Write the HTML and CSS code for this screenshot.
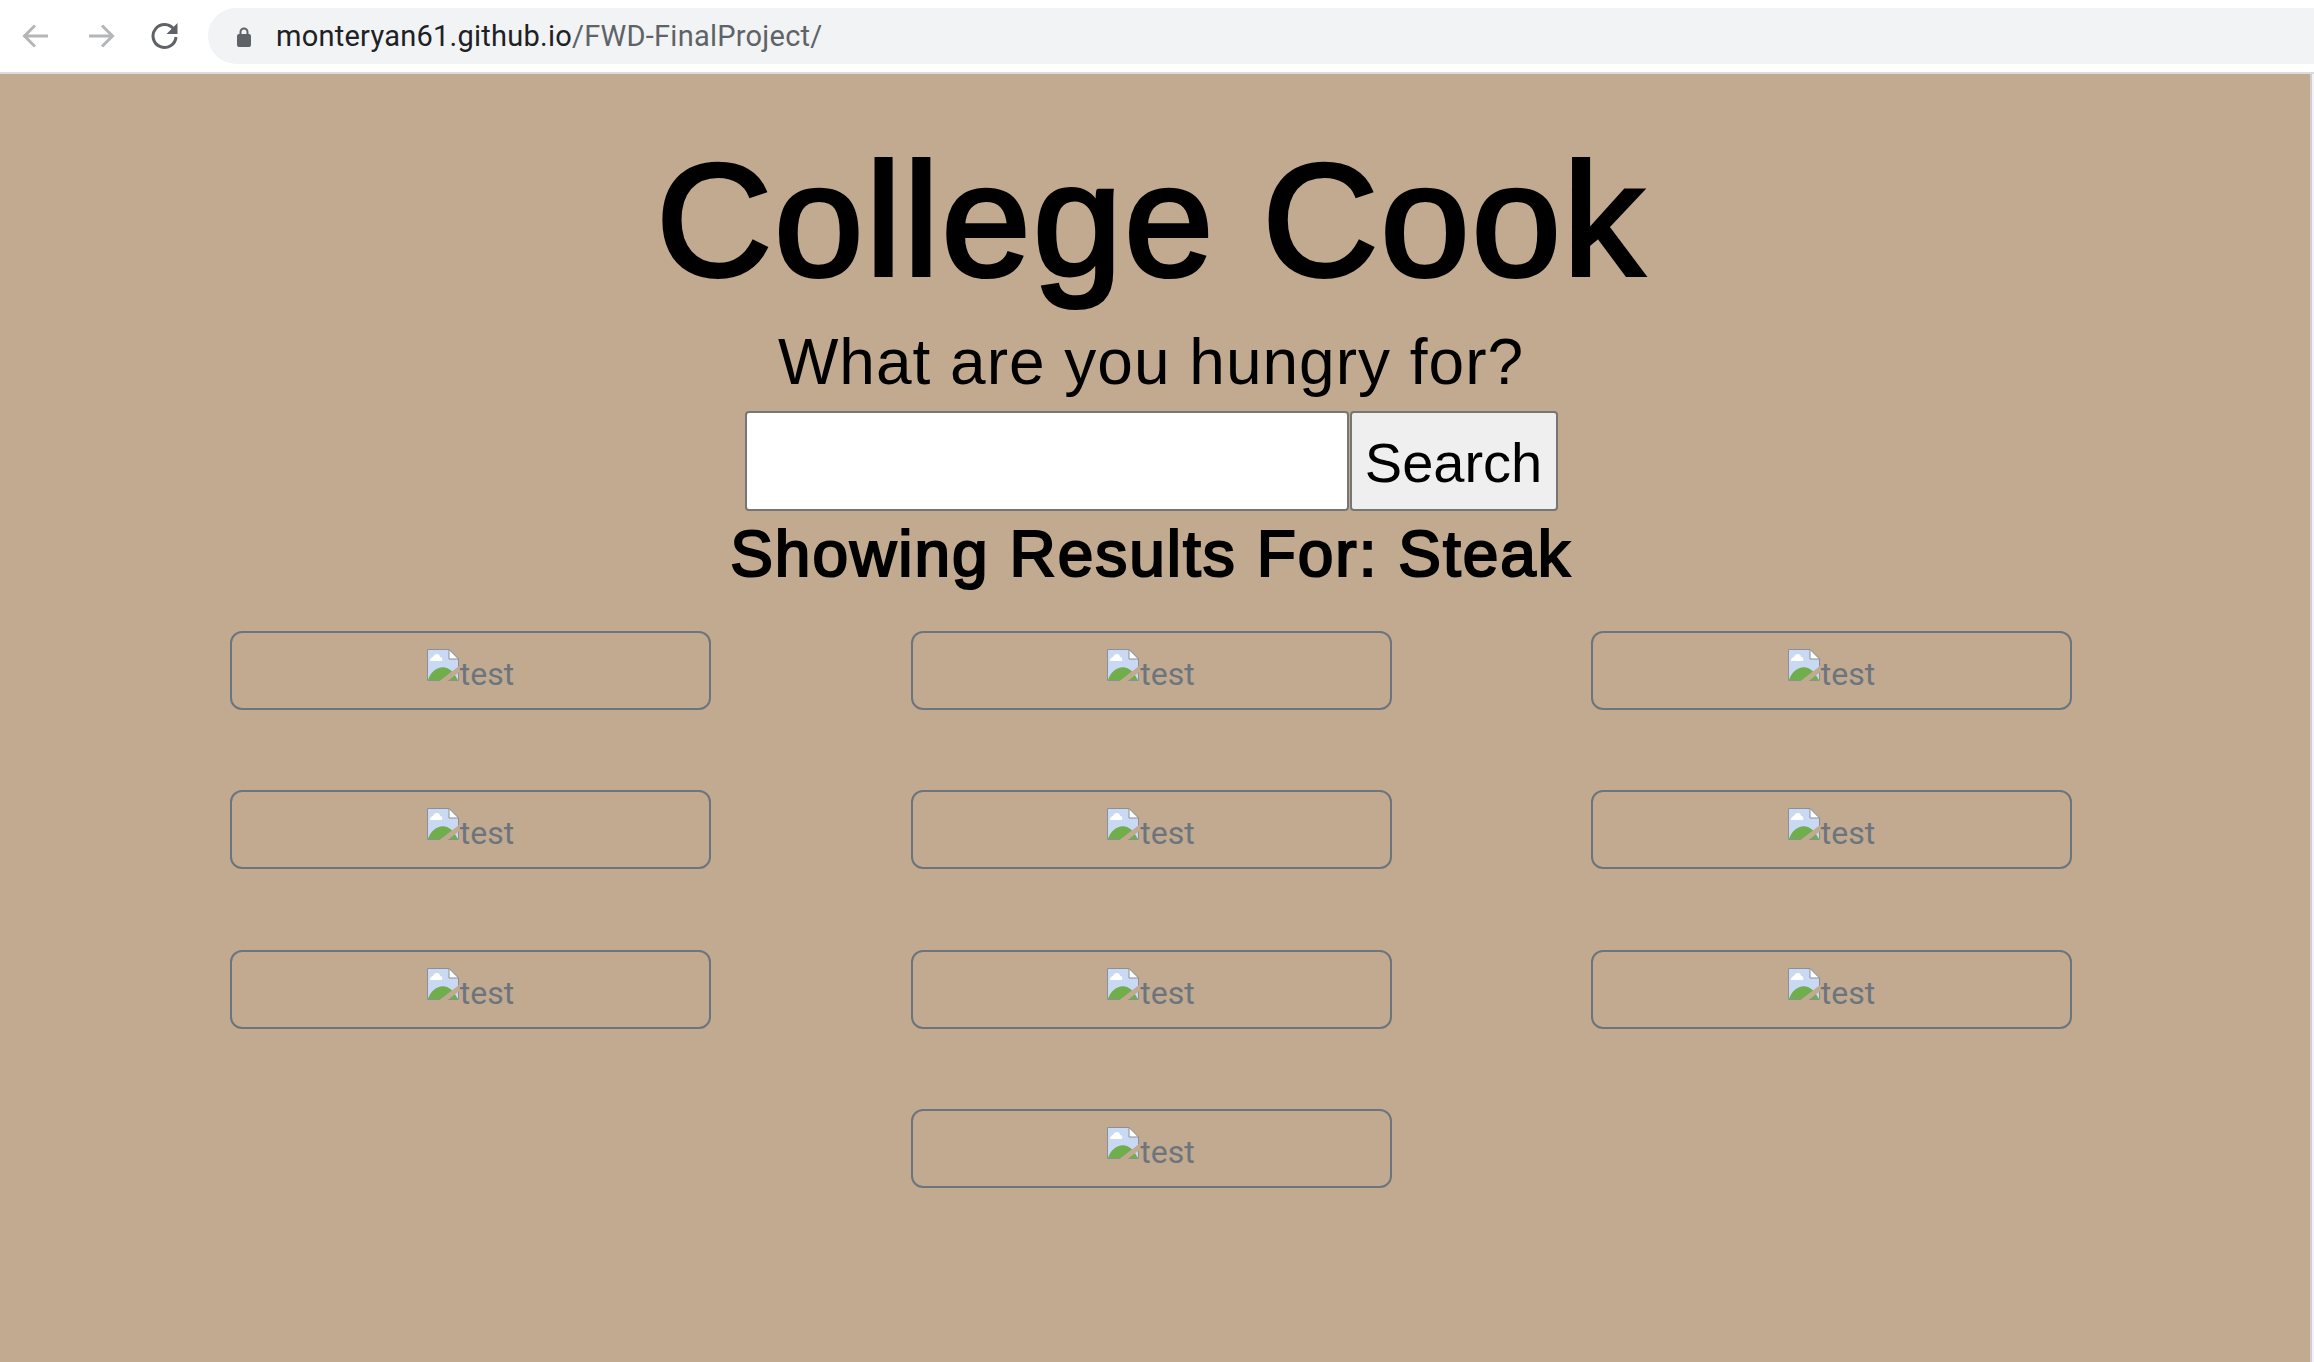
FILE: index.html
```html
<!DOCTYPE html>
<html lang="en">
<head>
<meta charset="UTF-8" />
<title>College Cook</title>
<link rel="stylesheet" href="styles.css">
</head>
<body>
  <header class="toolbar">
    <svg class="nav-icon" viewBox="0 0 28 28" aria-hidden="true"><path d="M26 14H3M13 3.500 2.500 14 13 24.500" class="icon-off"/></svg>
    <svg class="nav-icon" viewBox="0 0 28 28" aria-hidden="true"><path d="M2 14H25M15 3.500 25.500 14 15 24.500" class="icon-off"/></svg>
    <svg class="nav-icon" viewBox="0 0 28 28" aria-hidden="true"><path d="M23 7.500A11.500 11.500 0 1 0 25 15" class="icon-on"/><path d="M26.500 1V12H15.500Z" class="icon-fill"/></svg>
    <div class="url-bar">
      <svg class="lock" viewBox="0 0 14 21" aria-hidden="true"><path d="M3.500 9V6a3.500 3.500 0 0 1 7 0V9" class="lock-loop"/><rect x="0" y="8" width="14" height="13" rx="2"/></svg>
      <span class="url-host">monteryan61.github.io</span><span class="url-path">/FWD-FinalProject/</span>
    </div>
  </header>

  <main class="page">
    <h1>College Cook</h1>
    <p class="prompt">What are you hungry for?</p>
    <form class="search">
      <input type="text" class="search-input" aria-label="Search" />
      <button type="button" class="search-button">Search</button>
    </form>
    <h2>Showing Results For: Steak</h2>

    <div class="results">
      <a class="result" href="#"><svg class="broken" viewBox="0 0 32 32"><use href="#broken-img"/></svg>test</a>
      <a class="result" href="#"><svg class="broken" viewBox="0 0 32 32"><use href="#broken-img"/></svg>test</a>
      <a class="result" href="#"><svg class="broken" viewBox="0 0 32 32"><use href="#broken-img"/></svg>test</a>
      <a class="result" href="#"><svg class="broken" viewBox="0 0 32 32"><use href="#broken-img"/></svg>test</a>
      <a class="result" href="#"><svg class="broken" viewBox="0 0 32 32"><use href="#broken-img"/></svg>test</a>
      <a class="result" href="#"><svg class="broken" viewBox="0 0 32 32"><use href="#broken-img"/></svg>test</a>
      <a class="result" href="#"><svg class="broken" viewBox="0 0 32 32"><use href="#broken-img"/></svg>test</a>
      <a class="result" href="#"><svg class="broken" viewBox="0 0 32 32"><use href="#broken-img"/></svg>test</a>
      <a class="result" href="#"><svg class="broken" viewBox="0 0 32 32"><use href="#broken-img"/></svg>test</a>
      <a class="result result-last" href="#"><svg class="broken" viewBox="0 0 32 32"><use href="#broken-img"/></svg>test</a>
    </div>
  </main>

  <!-- broken image icon, shared by all the results -->
  <svg class="defs" aria-hidden="true">
    <symbol id="broken-img" viewBox="0 0 32 32">
      <path d="M.5.5H22L31.500 10V31.500H.5Z" fill="#c9d9f3" stroke="#8c8f94"/>
      <path d="M22 .5V10H31.500Z" fill="#fff" stroke="#8c8f94"/>
      <path d="M1 31C4 21 13 16 20 19 25 21 28 26 31 31Z" fill="#6fae4a"/>
      <path d="M3 12C3 9 5 8 6 8 7 4 13 4 13 8 15 8 16 10 15 12Z" fill="#fff"/>
      <path d="M14 34 36 17" stroke="#c1aa8f" stroke-width="5" fill="none"/>
    </symbol>
  </svg>
</body>
</html>
```

FILE: styles.css
```css
/* Reset */
*,
*::before,
*::after {
  box-sizing: border-box;
}

body {
  margin: 0;
  min-height: 1362px;
  font-family: 'Liberation Sans', Arial, sans-serif;
  color: #000;
  background-color: #c1aa8f;
  box-shadow: inset -2px 0 0 #f1f3f4, inset -4px 0 0 #cfcfcf;
  overflow: hidden;
}

/* Browser toolbar */
.toolbar {
  display: flex;
  align-items: center;
  height: 74px;
  padding-left: 22px;
  background-color: #fff;
  border-bottom: 2px solid #d9dbdc;
}

.nav-icon {
  flex: none;
  width: 28px;
  height: 28px;
  margin-right: 37px;
  fill: none;
}

.nav-icon:nth-of-type(3) {
  margin-right: 29px;
}

.nav-icon:nth-of-type(2) {
  margin-right: 36px;
}

.icon-off {
  stroke: #b4b6b8;
  stroke-width: 3;
}

.icon-on {
  fill: none;
  stroke: #5f6368;
  stroke-width: 3;
}

.icon-fill {
  fill: #5f6368;
}

.url-bar {
  display: flex;
  flex: 1;
  align-items: center;
  height: 56px;
  padding-left: 29px;
  background-color: #f1f3f4;
  border-radius: 28px 0 0 28px;
  font-family: Roboto, sans-serif;
  font-size: 29px;
  letter-spacing: 0.25px;
}

.lock {
  width: 14px;
  height: 21px;
  margin-right: 25px;
  fill: #5f6368;
}

.lock-loop {
  fill: none;
  stroke: #5f6368;
  stroke-width: 2;
}

.url-host {
  color: #202124;
}

.url-path {
  color: #5f6368;
}

/* Heading and search */
.page {
  width: 2302px;
  padding-top: 60px;
  text-align: center;
}

h1 {
  margin: 0;
  font-size: 160px;
  font-weight: 400;
  line-height: 172px;
  letter-spacing: 2.4px;
  -webkit-text-stroke: 4px #000;
}

.prompt {
  margin: 18px 0 0;
  font-size: 64px;
  line-height: 77px;
  letter-spacing: 1px;
}

.search {
  display: flex;
  justify-content: center;
  margin-top: 10px;
}

.search-input {
  width: 604px;
  height: 100px;
  background-color: #fff;
  border: 2px solid #767676;
  border-radius: 4px;
}

.search-button {
  width: 208px;
  height: 100px;
  margin-left: 1px;
  padding: 2px 0 0;
  background-color: #efefef;
  border: 2px solid #767676;
  border-radius: 4px;
  font-family: 'Liberation Sans', Arial, sans-serif;
  font-size: 56px;
  color: #000;
}

h2 {
  margin: 5px 0 0;
  font-size: 64px;
  font-weight: 400;
  line-height: 77px;
  letter-spacing: 2px;
  -webkit-text-stroke: 2.2px #000;
}

/* Results grid */
.results {
  display: grid;
  grid-template-columns: repeat(3, 481px);
  justify-content: center;
  column-gap: 199.500px;
  row-gap: 80.400px;
  margin-top: 38px;
}

.result {
  display: flex;
  justify-content: center;
  height: 79px;
  padding-top: 16px;
  color: #6c757d;
  border: 2px solid #6c757d;
  border-radius: 12px;
  font-family: Roboto, sans-serif;
  font-size: 32px;
  line-height: 50px;
  text-decoration: none;
}

.result-last {
  grid-column: 2;
}

.broken {
  width: 32px;
  height: 32px;
  margin-right: 1px;
}

.defs {
  display: none;
}
```
